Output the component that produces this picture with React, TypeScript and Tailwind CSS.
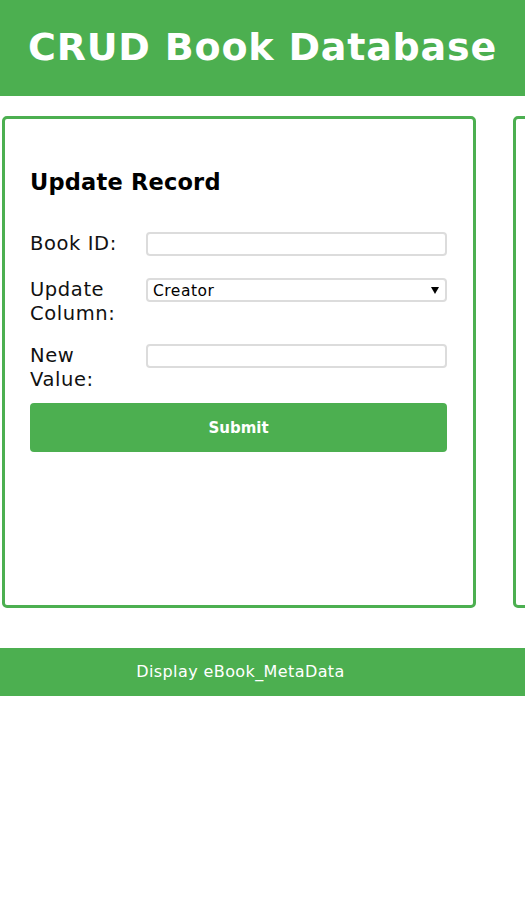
import React from "react";

export default function App() {
  const font = { fontFamily: '"DejaVu Sans", Verdana, sans-serif' };
  return (
    <div className="w-[525px] bg-white overflow-hidden" style={font}>
      <header className="h-[96px] bg-[#4CAF50] flex items-center justify-center">
        <h1 className="text-white font-bold text-[38px] leading-none tracking-[0.8px] -mt-[3px]">CRUD Book Database</h1>
      </header>
      <div className="flex gap-[37px] mt-[20px] pl-[2px] overflow-hidden">
        <section className="shrink-0 w-[474px] h-[492px] border-[3px] border-[#4CAF50] rounded-[5px] pl-[25px] pr-[26px] pt-[49px]">
          <h2 className="font-bold text-[22.5px] leading-[28px] text-black tracking-[0.2px]">Update Record</h2>
          <div className="mt-[36px] flex items-start">
            <label className="w-[116px] shrink-0 text-[19.5px] leading-[24px] text-[#111] tracking-[0.6px]">Book ID:</label>
            <div className="w-[301px] h-[24px] border-2 border-[#dcdcdc] rounded-[4px] bg-white"></div>
          </div>
          <div className="mt-[22px] flex items-start">
            <label className="w-[116px] shrink-0 text-[19.5px] leading-[24px] text-[#111] tracking-[0.6px]">Update<br />Column:</label>
            <div className="w-[301px] h-[24px] border-2 border-[#dcdcdc] rounded-[4px] bg-white flex items-center justify-between pl-[5px] pr-[6px]">
              <span className="text-[15.5px] text-black leading-none tracking-[0.5px] pt-[3px]">Creator</span>
              <svg width="8" height="7" viewBox="0 0 8 7"><path d="M0 0 H8 L4 7 Z" fill="#000" /></svg>
            </div>
          </div>
          <div className="mt-[18px] flex items-start">
            <label className="w-[116px] shrink-0 text-[19.5px] leading-[24px] text-[#111] tracking-[0.6px]">New<br />Value:</label>
            <div className="w-[301px] h-[24px] border-2 border-[#dcdcdc] rounded-[4px] bg-white"></div>
          </div>
          <button className="mt-[11px] w-[417px] h-[49px] bg-[#4CAF50] rounded-[4px] text-white font-bold text-[15px] pt-[2px]">Submit</button>
        </section>
        <section className="shrink-0 w-[474px] h-[492px] border-[3px] border-[#4CAF50] rounded-[5px]"></section>
      </div>
      <div className="mt-[40px] h-[48px] bg-[#4CAF50] flex items-center">
        <div className="w-[481px] text-center text-white text-[16px] tracking-[0.4px]">Display eBook_MetaData</div>
      </div>
      <div className="h-[205px]"></div>
    </div>
  );
}
